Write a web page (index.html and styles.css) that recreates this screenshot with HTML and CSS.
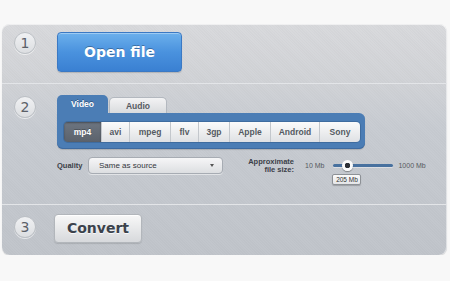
FILE: index.html
```html
<!DOCTYPE html>
<html>
<head>
<meta charset="utf-8">
<link rel="stylesheet" href="styles.css">
</head>
<body>
<div class="panel">
  <div class="step s1">
    <div class="num">1</div>
    <div class="btn-open">Open file</div>
  </div>
  <div class="step s2">
    <div class="num">2</div>
    <div class="content">
      <div class="tabs">
        <div class="tab tab-video">Video</div>
        <div class="tab tab-audio">Audio</div>
      </div>
      <div class="box">
        <div class="formats">
          <div class="fmt active" style="width:37px">mp4</div>
          <div class="fmt" style="width:28px">avi</div>
          <div class="fmt" style="width:41px">mpeg</div>
          <div class="fmt" style="width:28px">flv</div>
          <div class="fmt" style="width:31px">3gp</div>
          <div class="fmt" style="width:41px">Apple</div>
          <div class="fmt" style="width:49px">Android</div>
          <div class="fmt" style="width:41px">Sony</div>
        </div>
      </div>
      <div class="options">
        <div class="q-label">Quality</div>
        <div class="select"><span>Same as source</span><span class="caret"></span></div>
        <div class="size-label">Approximate<br>file size:</div>
        <div class="min">10 Mb</div>
        <div class="track">
          <div class="thumb"></div>
          <div class="tip">205 Mb</div>
        </div>
        <div class="max">1000 Mb</div>
      </div>
    </div>
  </div>
  <div class="step s3">
    <div class="num">3</div>
    <div class="btn-convert">Convert</div>
  </div>
</div>
</body>
</html>
```

FILE: styles.css
```css
html, body {
  margin: 0;
  padding: 0;
}
body {
  background: #f8f8f8;
  font-family: "Liberation Sans", Arial, sans-serif;
}
.panel {
  margin: 24px 0 0 2px;
  width: 445px;
  height: 231px;
  border-radius: 8px;
  overflow: hidden;
  background:
    repeating-linear-gradient(45deg, rgba(255,255,255,0.025) 0 1px, rgba(0,0,0,0.01) 1px 2px),
    linear-gradient(#d8d9dc 0%, #d0d2d6 25%, #c7cbd1 45%, #c0c4ca 100%);
  box-shadow: inset 0 1px 0 rgba(255,255,255,0.6), inset -1px 0 0 rgba(255,255,255,0.5), 0 1px 1px rgba(0,0,0,0.12);
}
.step {
  display: flex;
  align-items: flex-start;
  padding-left: 12px;
  box-sizing: border-box;
}
.s1 { height: 59px; padding-top: 8px; }
.s2 { height: 121px; padding-top: 11px; border-top: 1px solid #e3e5e8; }
.s3 { height: 51px; padding-top: 9px; border-top: 1px solid #e3e5e8; }
.num {
  width: 22px;
  height: 22px;
  box-sizing: border-box;
  border-radius: 50%;
  background: linear-gradient(#f0f1f3, #dcdee1);
  border: 1px solid #bcc0c5;
  box-shadow: 0 1px 0 rgba(255,255,255,0.6);
  font-family: "DejaVu Sans", sans-serif;
  font-size: 14px;
  line-height: 20px;
  text-align: center;
  color: #5b6068;
}
.s2 .num { margin-top: 1px; }
.s3 .num { margin-top: 2px; }
.btn-open {
  margin-left: 21px;
  width: 125px;
  height: 40px;
  box-sizing: border-box;
  border: 1px solid #3b79c4;
  border-radius: 4px;
  background: linear-gradient(#6cb0ec, #4a92de 50%, #3a80d2);
  box-shadow: inset 0 1px 0 rgba(255,255,255,0.35), 0 1px 1px rgba(0,0,0,0.15);
  color: #fff;
  font-family: "DejaVu Sans", sans-serif;
  font-weight: bold;
  font-size: 14px;
  line-height: 38px;
  text-align: center;
  text-shadow: 0 -1px 0 rgba(0,0,0,0.3);
}
.content {
  margin-left: 21px;
  display: flex;
  flex-direction: column;
}
.tabs {
  display: flex;
  align-items: flex-end;
  height: 18px;
}
.tab {
  font-weight: bold;
  font-size: 8.5px;
  text-align: center;
  box-sizing: border-box;
  border-radius: 5px 5px 0 0;
}
.tab-video {
  width: 51px;
  height: 18px;
  background: #4b7db5;
  color: #fff;
  line-height: 19px;
  text-shadow: 0 -1px 0 rgba(0,0,0,0.3);
}
.tab-audio {
  width: 58px;
  height: 16px;
  margin-left: 1px;
  background: linear-gradient(#f3f3f4, #d9dbde);
  border: 1px solid #b3b8bf;
  border-bottom: none;
  color: #555a61;
  line-height: 17px;
}
.box {
  width: 308px;
  box-sizing: border-box;
  padding: 9px 5px 7px 7px;
  background: #4b7db5;
  border-radius: 0 6px 6px 6px;
  box-shadow: inset 0 -1px 0 #3e6a9f, 0 1px 1px rgba(0,0,0,0.15);
}
.formats {
  display: flex;
  height: 20px;
  border-radius: 4px;
  overflow: hidden;
  box-shadow: 0 0 0 1px #3f6c9f;
}
.fmt {
  height: 20px;
  box-sizing: border-box;
  background: linear-gradient(#fbfbfb, #dfe1e4);
  border-left: 1px solid #c3c7cc;
  color: #545a62;
  font-weight: bold;
  font-size: 8.5px;
  line-height: 20px;
  text-align: center;
}
.fmt:first-child { border-left: none; }
.fmt.active {
  background: linear-gradient(#6d7580, #5b626c);
  color: #fff;
  box-shadow: inset 0 1px 2px rgba(0,0,0,0.35);
  text-shadow: 0 -1px 0 rgba(0,0,0,0.3);
}
.options {
  display: flex;
  align-items: center;
  margin-top: 8px;
  height: 17px;
}
.q-label {
  width: 31px;
  font-weight: bold;
  font-size: 7.5px;
  color: #3b4048;
}
.select {
  width: 135px;
  height: 17px;
  box-sizing: border-box;
  display: flex;
  align-items: center;
  justify-content: space-between;
  padding: 0 8px 0 10px;
  border: 1px solid #a7acb3;
  border-radius: 4px;
  background: linear-gradient(#f6f6f7, #dcdee1);
  box-shadow: 0 1px 0 rgba(255,255,255,0.5);
  font-size: 8px;
  color: #33373d;
}
.caret {
  width: 0;
  height: 0;
  border-left: 2.5px solid transparent;
  border-right: 2.5px solid transparent;
  border-top: 3px solid #555;
}
.size-label {
  margin-left: 25px;
  width: 46px;
  text-align: right;
  font-weight: bold;
  font-size: 7.5px;
  line-height: 8px;
  color: #3b4048;
  padding-top: 1px;
}
.min {
  margin-left: 11px;
  font-size: 7px;
  color: #555a61;
}
.track {
  position: relative;
  margin-left: 9px;
  width: 60px;
  height: 3px;
  border-radius: 2px;
  background: #48719f;
  box-shadow: 0 1px 0 rgba(255,255,255,0.4);
}
.thumb {
  position: absolute;
  left: 9px;
  top: -4px;
  width: 11px;
  height: 11px;
  box-sizing: border-box;
  border-radius: 50%;
  background: radial-gradient(circle, #2d3036 0 2.5px, #fafafa 3px);
  box-shadow: 0 1px 1px rgba(0,0,0,0.35);
}
.tip {
  position: absolute;
  left: -1px;
  top: 10px;
  width: 29px;
  height: 11px;
  box-sizing: border-box;
  border: 1px solid #8d9196;
  border-radius: 2px;
  background: linear-gradient(#fafafa, #e4e5e7);
  box-shadow: 0 1px 1px rgba(0,0,0,0.2);
  font-size: 6.5px;
  line-height: 9px;
  text-align: center;
  color: #333;
}
.max {
  margin-left: 5px;
  font-size: 7px;
  color: #555a61;
}
.btn-convert {
  margin-left: 18px;
  width: 88px;
  height: 29px;
  box-sizing: border-box;
  border: 1px solid #b2b6bb;
  border-radius: 4px;
  background: linear-gradient(#f8f8f8, #d7d9dc);
  box-shadow: inset 0 1px 0 #fff, 0 1px 1px rgba(0,0,0,0.12);
  color: #3b424c;
  font-family: "DejaVu Sans", sans-serif;
  font-weight: bold;
  font-size: 14px;
  line-height: 27px;
  text-align: center;
  text-shadow: 0 1px 0 rgba(255,255,255,0.8);
}
```
